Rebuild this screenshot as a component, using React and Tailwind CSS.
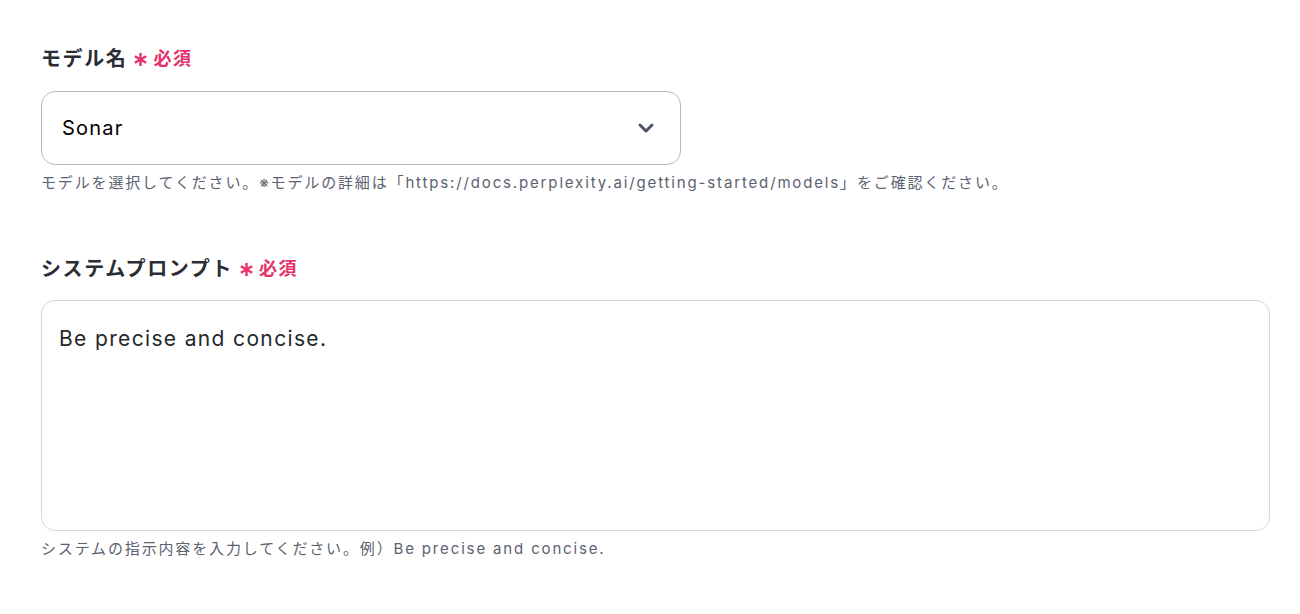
import { ChevronDown } from 'lucide-react';

const font = { fontFamily: 'Inter, "Noto Sans CJK JP", sans-serif' };

function Asterisk() {
  return (
    <svg viewBox="0 0 16 16" className="h-[15px] w-[15px]" fill="none" stroke="currentColor" strokeWidth="2.6" strokeLinecap="butt">
      <path d="M8 1v14" />
      <path d="M1.94 4.5l12.12 7" />
      <path d="M1.94 11.5l12.12-7" />
    </svg>
  );
}

function Label({ children }) {
  return (
    <div className="flex items-center">
      <span className="text-[20px] font-semibold leading-7 tracking-[1.6px] text-[#2a2d33]">{children}</span>
      <span className="ml-[6px] flex items-center text-[#e5336a]">
        <Asterisk />
        <span className="ml-[5px] text-[18px] font-semibold leading-7 tracking-[1.5px]">必須</span>
      </span>
    </div>
  );
}

export default function App() {
  return (
    <div className="min-h-screen bg-white px-[41px] pt-[45px]" style={font}>
      <div>
        <Label>モデル名</Label>
        <div className="mt-[18px] flex h-[74px] w-[640px] items-center justify-between rounded-[14px] border border-[#b3b8c0] pl-[20px] pr-[22px]">
          <span className="text-[20px] tracking-[1.2px] text-black">Sonar</span>
          <ChevronDown className="h-6 w-6 text-[#4b5563]" strokeWidth={3} />
        </div>
        <p className="mt-[8px] text-[15px] leading-5 tracking-[1.85px] text-[#5b6270]">
          モデルを選択してください。※モデルの詳細は「https://docs.perplexity.ai/getting-started/models」をご確認ください。
        </p>
      </div>

      <div className="mt-[62px]">
        <Label>システムプロンプト</Label>
        <div className="mt-[17px] h-[231px] w-[1229px] rounded-[14px] border border-[#d3d8df] px-[17px] pt-[22px]">
          <span className="text-[21px] tracking-[1.35px] text-[#25282d]">Be precise and concise.</span>
        </div>
        <p className="mt-[8px] text-[15px] leading-5 tracking-[1.85px] text-[#5b6270]">
          システムの指示内容を入力してください。例）Be precise and concise.
        </p>
      </div>
    </div>
  );
}
